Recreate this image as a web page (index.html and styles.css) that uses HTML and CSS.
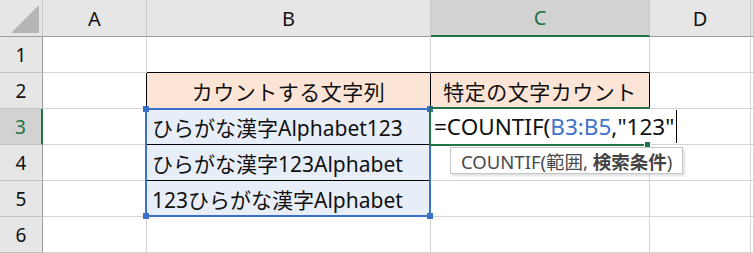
FILE: index.html
```html
<!DOCTYPE html>
<html lang="ja">
<head>
    <meta charset="UTF-8">
    <title>COUNTIF</title>
    <link rel="stylesheet" href="styles.css">
</head>
<body>
    <div class="sheet">
        <!-- header row -->
        <div class="corner">
            <svg width="43" height="37" viewBox="0 0 43 37"><polygon points="11,33 39,33 39,5" fill="#b5b5b5"/></svg>
        </div>
        <div class="col-head">A</div>
        <div class="col-head">B</div>
        <div class="col-head active">C</div>
        <div class="col-head">D</div>
        <div class="col-head"></div>

        <!-- row 1 -->
        <div class="row-head">1</div>
        <div class="cell"></div>
        <div class="cell b-bottom"></div>
        <div class="cell b-bottom"></div>
        <div class="cell"></div>
        <div class="cell"></div>

        <!-- row 2 -->
        <div class="row-head">2</div>
        <div class="cell b-right"></div>
        <div class="cell title b-right b-bottom">カウントする文字列</div>
        <div class="cell title b-right b-bottom">特定の文字カウント</div>
        <div class="cell"></div>
        <div class="cell"></div>

        <!-- row 3 -->
        <div class="row-head active">3</div>
        <div class="cell b-right"></div>
        <div class="cell data b-right b-bottom">ひらがな漢字Alphabet123</div>
        <div class="cell editor">
            <span>=COUNTIF(<span class="ref">B3:B5</span>,"123"</span><span class="caret"></span>
        </div>
        <div class="cell"></div>
        <div class="cell"></div>

        <!-- row 4 -->
        <div class="row-head">4</div>
        <div class="cell b-right"></div>
        <div class="cell data b-right b-bottom">ひらがな漢字123Alphabet</div>
        <div class="cell"></div>
        <div class="cell"></div>
        <div class="cell"></div>

        <!-- row 5 -->
        <div class="row-head">5</div>
        <div class="cell b-right"></div>
        <div class="cell data b-right b-bottom">123ひらがな漢字Alphabet</div>
        <div class="cell"></div>
        <div class="cell"></div>
        <div class="cell"></div>

        <!-- row 6 -->
        <div class="row-head">6</div>
        <div class="cell"></div>
        <div class="cell"></div>
        <div class="cell"></div>
        <div class="cell"></div>
        <div class="cell"></div>

        <!-- overlays -->
        <div class="range-box">
            <span class="handle tl"></span>
            <span class="handle tr"></span>
            <span class="handle bl"></span>
            <span class="handle br"></span>
        </div>
        <div class="active-box">
            <span class="fill-handle"></span>
        </div>
        <div class="tip"><span>COUNTIF(範囲, <b>検索条件</b>)</span></div>
    </div>
</body>
</html>
```

FILE: styles.css
```css
body {
    margin: 0;
    padding: 0;
    background-color: white;
    overflow: hidden;
    font-family: "Noto Sans", "Noto Sans CJK JP", sans-serif;
}

.sheet {
    position: relative;
    display: grid;
    grid-template-columns: 43px 104px 284px 219px 101px 1fr;
    grid-template-rows: 37px repeat(6, 36px);
    width: 754px;
    height: 253px;
}

.corner,
.col-head,
.row-head,
.cell {
    box-sizing: border-box;
    border-right: 1px solid #d4d4d4;
    border-bottom: 1px solid #d4d4d4;
}

.corner {
    background-color: #e6e6e6;
    border-right-color: #c8c8c8;
    border-bottom-color: #9d9d9d;
}

.corner svg {
    display: block;
}

.col-head {
    display: flex;
    align-items: center;
    justify-content: center;
    background-color: #e6e6e6;
    border-right-color: #c8c8c8;
    border-bottom-color: #9d9d9d;
    font-size: 20px;
    color: #111;
}

.col-head.active {
    background-color: #d2d2d2;
    color: #217346;
    border-bottom: 2px solid #217346;
}

.row-head {
    display: flex;
    align-items: center;
    justify-content: center;
    background-color: #e6e6e6;
    border-right-color: #9d9d9d;
    border-bottom-color: #c4c4c4;
    font-size: 19px;
    color: #111;
}

.row-head.active {
    background-color: #d2d2d2;
    color: #217346;
    border-right: 2px solid #217346;
}

.cell {
    display: flex;
    align-items: center;
    white-space: nowrap;
    font-size: 21px;
    color: #111;
}

.b-right {
    border-right-color: #000;
}

.b-bottom {
    border-bottom-color: #000;
}

.title {
    justify-content: center;
    background-color: #fce4d6;
    letter-spacing: 0.5px;
}

.data {
    padding-left: 5px;
    background-color: #e8eef8;
}

.editor {
    position: relative;
    z-index: 2;
    padding-left: 3px;
    border-right-color: white;
    font-size: 22.5px;
}

.editor span {
    flex-shrink: 0;
}

.ref {
    color: #3f74c9;
}

.editor .caret {
    display: block;
    width: 1px;
    height: 33px;
    margin-left: 2px;
    background-color: #000;
}

/* colored border of the referenced range */
.range-box {
    position: absolute;
    left: 145px;
    top: 108px;
    width: 286px;
    height: 109px;
    box-sizing: border-box;
    border: 2px solid #3a70c8;
    z-index: 3;
}

.handle {
    position: absolute;
    width: 6px;
    height: 6px;
    background-color: #3a70c8;
}

.handle.tl { left: -4px; top: -4px; }
.handle.tr { right: -4px; top: -4px; }
.handle.bl { left: -4px; bottom: -4px; }
.handle.br { right: -4px; bottom: -4px; }

/* active cell */
.active-box {
    position: absolute;
    left: 429px;
    top: 107px;
    width: 221px;
    height: 39px;
    box-sizing: border-box;
    border: 2px solid #217346;
    border-right: none;
    z-index: 4;
}

.fill-handle {
    position: absolute;
    right: -1px;
    bottom: -4px;
    width: 5px;
    height: 5px;
    background-color: #217346;
    border: 1px solid white;
}

.tip {
    position: absolute;
    left: 450px;
    top: 147px;
    height: 27px;
    box-sizing: border-box;
    padding: 0 10px;
    display: flex;
    align-items: center;
    background-color: white;
    border: 1px solid #c6c6c6;
    box-shadow: 2px 2px 2px rgba(0, 0, 0, 0.12);
    font-size: 18.5px;
    color: #4a4a4a;
    white-space: nowrap;
    z-index: 5;
}

.tip b {
    font-weight: bold;
    color: #444;
}
```
